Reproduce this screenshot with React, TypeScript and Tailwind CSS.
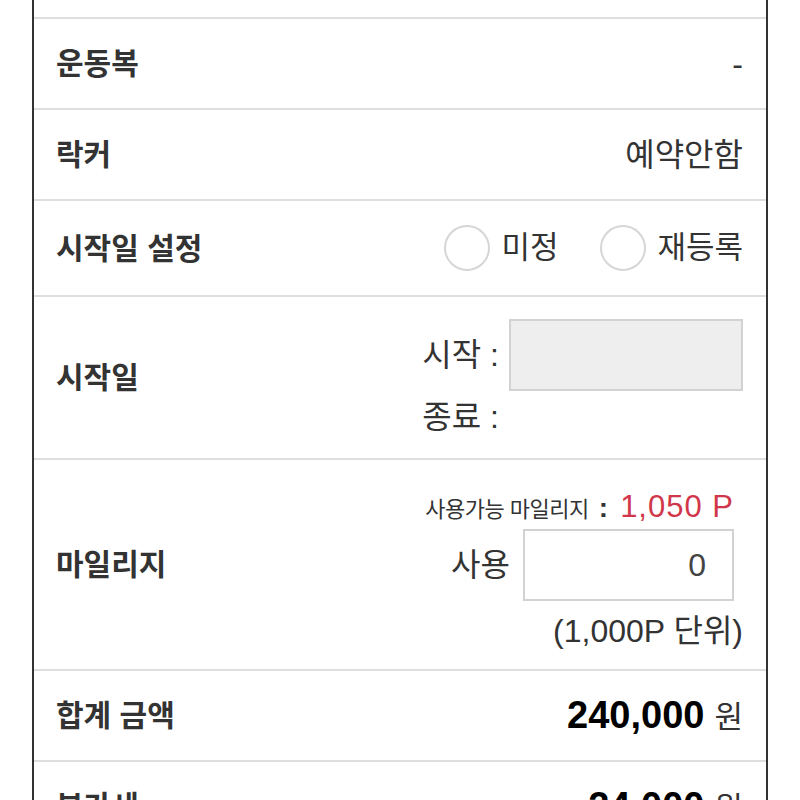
import { useState } from "react";

const font = "font-['Liberation_Sans','Noto_Sans_CJK_KR',sans-serif]";

function Row({
  label,
  height,
  children,
}: {
  label: string;
  height: string;
  children?: React.ReactNode;
}) {
  return (
    <div
      className={`flex items-center justify-between border-b-2 border-[#dedede] pl-[22px] pr-[23px] ${height}`}
    >
      <span className="text-[30px] font-bold text-[#333]">{label}</span>
      {children}
    </div>
  );
}

function Radio({ label, checked, onClick }: { label: string; checked: boolean; onClick: () => void }) {
  return (
    <button type="button" onClick={onClick} className="flex items-center gap-[11px]">
      <span className="flex h-[46px] w-[46px] items-center justify-center rounded-full border-2 border-[#d6d6d6] bg-white">
        {checked && <span className="h-[22px] w-[22px] rounded-full bg-[#333]" />}
      </span>
      <span className="text-[31px] text-[#333]">{label}</span>
    </button>
  );
}

export default function App() {
  const [startMode, setStartMode] = useState("");
  const [mileage, setMileage] = useState("0");

  return (
    <main className={`min-h-screen bg-white ${font}`}>
      <div className="mx-auto w-[736px] border-x-2 border-[#333] bg-white">
        <div className="h-[19px] border-b-2 border-[#dedede]" />

        <Row label="운동복" height="h-[91px]">
          <span className="text-[32px] text-[#333]">-</span>
        </Row>

        <Row label="락커" height="h-[91px]">
          <span className="text-[32px] text-[#333]">예약안함</span>
        </Row>

        <Row label="시작일 설정" height="h-[96px]">
          <div className="flex items-center gap-[42px]">
            <Radio label="미정" checked={startMode === "none"} onClick={() => setStartMode("none")} />
            <Radio label="재등록" checked={startMode === "re"} onClick={() => setStartMode("re")} />
          </div>
        </Row>

        {/* 시작일 */}
        <Row label="시작일" height="h-[163px]">
          <div className="flex flex-col pt-[4px]">
            <div className="flex items-center gap-[10px]">
              <span className="text-[32px] text-[#333]">시작 :</span>
              <div className="h-[72px] w-[234px] border-2 border-[#d2d2d2] bg-[#eeeeee]" />
            </div>
            <span className="mt-[2px] text-[32px] text-[#333]">종료 :</span>
          </div>
        </Row>

        {/* 마일리지 */}
        <Row label="마일리지" height="h-[211px]">
          <div className="flex flex-col items-end pt-[10px]">
            <div className="mr-[9px] flex items-baseline">
              <span className="text-[22px] tracking-[-0.5px] text-[#333]">사용가능 마일리지</span>
              <span className="ml-[10px] text-[28px] font-bold text-[#333]">:</span>
              <span className="ml-[12px] text-[31px] tracking-[1px] text-[#d0374b]">1,050 P</span>
            </div>
            <div className="-mt-[1px] mr-[9px] flex items-center gap-[13px]">
              <span className="text-[32px] text-[#333]">사용</span>
              <input
                value={mileage}
                onChange={(e) => setMileage(e.target.value)}
                className="h-[72px] w-[211px] border-2 border-[#d2d2d2] bg-white px-[26px] text-right text-[32px] text-[#444] focus:outline-none"
              />
            </div>
            <span className="mt-[6px] text-[32px] text-[#333]">(1,000P 단위)</span>
          </div>
        </Row>

        <Row label="합계 금액" height="h-[91px]">
          <div className="flex items-baseline gap-[10px]">
            <span className="text-[38px] font-bold text-black">240,000</span>
            <span className="text-[31px] text-[#333]">원</span>
          </div>
        </Row>

        <Row label="부가세" height="h-[91px]">
          <div className="flex items-baseline gap-[10px]">
            <span className="text-[38px] font-bold text-black">24,000</span>
            <span className="text-[31px] text-[#333]">원</span>
          </div>
        </Row>
      </div>
    </main>
  );
}
